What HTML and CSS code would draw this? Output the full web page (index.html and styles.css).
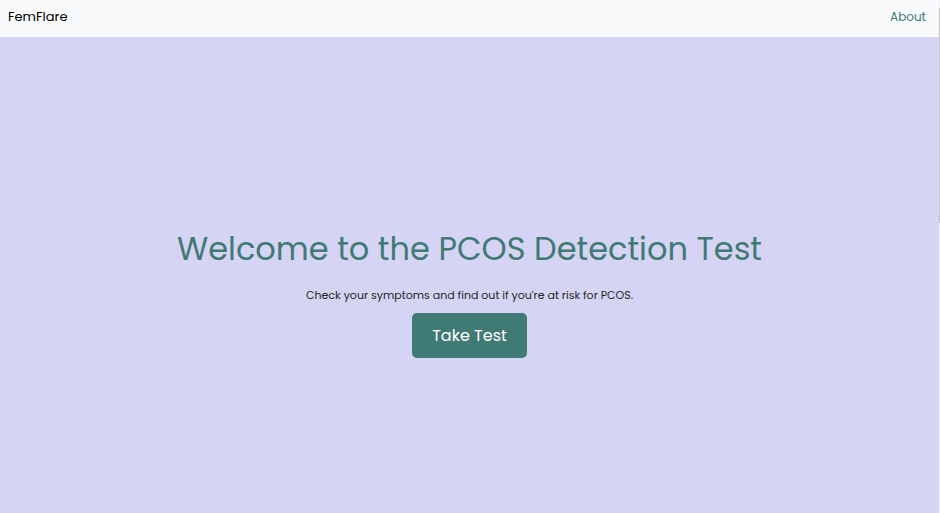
FILE: index.html
```html
<!DOCTYPE html>
<html lang="en">
<head>
<meta charset="utf-8">
<title>FemFlare</title>
<link rel="stylesheet" href="styles.css">
</head>
<body>
<header class="navbar">
<a class="brand" href="#">FemFlare</a>
<nav><a class="nav-link" href="#">About</a></nav>
</header>
<main class="hero">
<h1 class="title">Welcome to the PCOS Detection Test</h1>
<p class="lead">Check your symptoms and find out if you're at risk for PCOS.</p>
<button class="cta" type="button">Take Test</button>
</main>
<div class="scroll-edge" aria-hidden="true"></div>
</body>
</html>
```
FILE: styles.css
```css
* { box-sizing: border-box; }
body {
  margin: 0;
  min-height: 100vh;
  display: flex;
  flex-direction: column;
  padding-right: 1px;
  background: #d6d4f4;
  color: #212529;
  font-family: Poppins, Inter, "Open Sans", sans-serif;
}
.navbar {
  display: flex;
  justify-content: space-between;
  align-items: center;
  padding: 6px 13px 9px 8px;
  line-height: 22px;
  background: #f8fafb;
}
.navbar nav { display: flex; }
.brand { color: #000; font-size: 13px; text-decoration: none; }
.nav-link { color: #407a74; font-size: 12px; text-decoration: none; }
.hero {
  flex: 1;
  display: flex;
  flex-direction: column;
  align-items: center;
  justify-content: center;
  padding-top: 36px;
}
.title {
  margin: 0 0 18px;
  color: #407a74;
  font-size: 32px;
  font-weight: 400;
  line-height: 40px;
}
.lead { margin: 0 0 10px; font-size: 11px; line-height: 16px; }
.cta {
  padding: 10px 20px;
  border: 0;
  border-radius: 5px;
  background: #407a74;
  color: #fff;
  font-family: inherit;
  font-size: 16px;
  line-height: 25px;
}
/* Thin scroll indicator along the window edge */
.scroll-edge {
  position: fixed;
  top: 0;
  right: 0;
  bottom: 0;
  width: 1px;
  background: #f4f4f8;
}
.scroll-edge::before {
  content: "";
  display: block;
  height: 42%;
  margin-top: 8px;
  background: #c4c4c6;
}
```
